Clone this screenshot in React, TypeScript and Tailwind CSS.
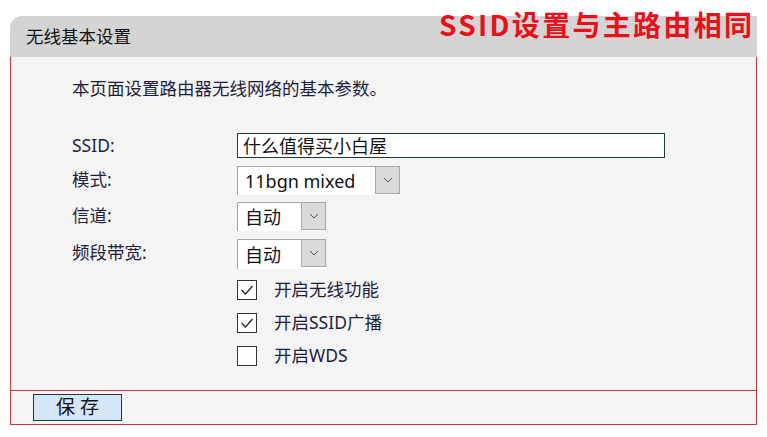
import React from "react";

const font = { fontFamily: '"Noto Sans", "Noto Sans CJK SC", sans-serif' };

function Chevron() {
  return (
    <svg width="10" height="6" viewBox="0 0 10 6" fill="none">
      <path d="M1 1 L5 5 L9 1" stroke="#555" strokeWidth="1" />
    </svg>
  );
}

function Select({ value, width }: { value: string; width: string }) {
  return (
    <div className={`flex h-full ${width} border-t border-l border-[#a6a6a6] bg-white`}>
      <div className="flex-1 flex items-center pl-[7px] text-[18px] text-[#111] leading-none">{value}</div>
      <div className="w-[25px] h-[28px] -mt-px bg-[#dadada] border border-[#a8a8a8] flex items-center justify-center">
        <Chevron />
      </div>
    </div>
  );
}

function Check({ checked, label }: { checked: boolean; label: string }) {
  return (
    <div className="flex items-center h-[20px]">
      <div className="w-[20px] h-[20px] border border-[#333] bg-white flex items-center justify-center">
        {checked && (
          <svg width="14" height="12" viewBox="0 0 14 12" fill="none">
            <path d="M1.5 6 L5.5 10 L12.5 2" stroke="#222" strokeWidth="1.3" />
          </svg>
        )}
      </div>
      <span className="ml-[17px] text-[17.5px] text-[#1e1e3c] leading-none">{label}</span>
    </div>
  );
}

export default function App() {
  return (
    <div className="w-[767px] h-[437px] bg-white relative overflow-hidden" style={font}>
      <div className="pt-[16px] pl-[10px] w-[757px]">
        <div className="h-[41px] bg-[#d4d4d4] rounded-tl-[12px] flex items-center pl-[16px] text-[17.5px] text-[#111]">
          无线基本设置
        </div>
        <div className="h-[333px] bg-[#f4f4f4] border-l border-r border-[#c23a3a] pl-[61px]">
          <div className="pt-[19px] h-[43px] text-[17.5px] leading-[24px] text-[#1e1e3c]">
            本页面设置路由器无线网络的基本参数。
          </div>
          <div className="mt-[33px] flex flex-col text-[17.5px] text-[#1e1e3c]">
            <div className="flex h-[25px] items-center">
              <div className="w-[165px]">SSID:</div>
              <div className="w-[428px] h-[25px] border border-[#1e3838] bg-white flex items-center pl-[5px] text-[18px] text-[#111] leading-none">
                什么值得买小白屋
              </div>
            </div>
            <div className="flex h-[29px] mt-[8px] items-center">
              <div className="w-[165px] -mt-[2px]">模式:</div>
              <Select value="11bgn mixed" width="w-[163px]" />
            </div>
            <div className="flex h-[29px] mt-[7px] items-center">
              <div className="w-[165px] -mt-[3px]">信道:</div>
              <Select value="自动" width="w-[89px]" />
            </div>
            <div className="flex h-[30px] mt-[8px] items-center">
              <div className="w-[165px] -mt-[3px]">频段带宽:</div>
              <Select value="自动" width="w-[89px]" />
            </div>
            <div className="pl-[165px] mt-[11px] flex flex-col gap-[13px]">
              <Check checked label="开启无线功能" />
              <Check checked label="开启SSID广播" />
              <Check checked={false} label="开启WDS" />
            </div>
          </div>
        </div>
        <div className="h-[35px] bg-[#f4f4f4] border border-[#c23a3a] pl-[22px] pt-[3px]">
          <button className="w-[89px] h-[27px] bg-[#d6e6f9] border border-[#1e3b3b] text-[19px] leading-none text-[#111] flex items-center justify-center">
            保&nbsp;存
          </button>
        </div>
      </div>
      <div
        className="absolute left-[439px] top-[6px] text-[28px] font-bold text-[#e8101a] tracking-[2.3px] leading-[36px]"
        style={{ fontFamily: '"Noto Sans CJK SC", "Noto Sans", sans-serif' }}
      >
        SSID设置与主路由相同
      </div>
    </div>
  );
}
